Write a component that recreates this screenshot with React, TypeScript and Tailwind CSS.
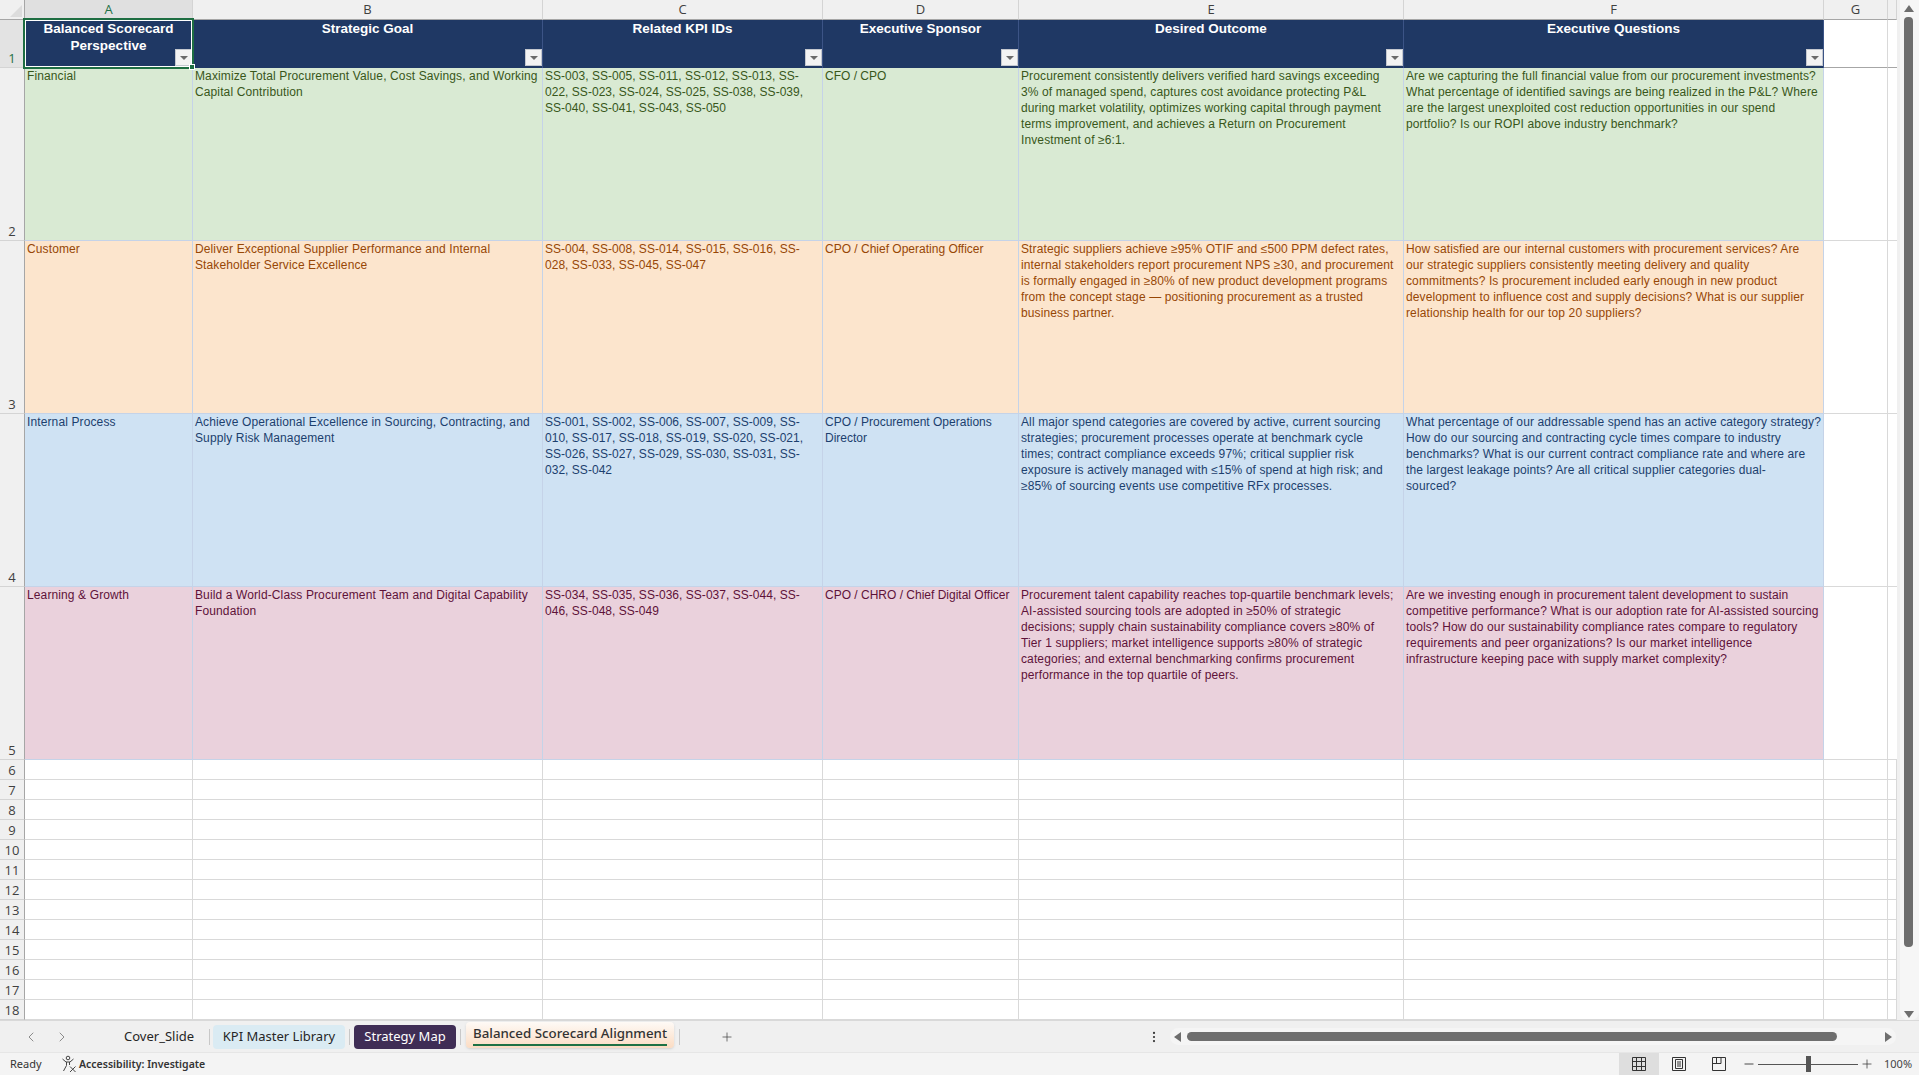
import React from 'react';
import { ChevronLeft, ChevronRight, MoreVertical, Plus, Minus } from 'lucide-react';

const columns = ['A', 'B', 'C', 'D', 'E', 'F', 'G', ''];

const headers = [
    ['Balanced Scorecard', 'Perspective'],
    ['Strategic Goal'],
    ['Related KPI IDs'],
    ['Executive Sponsor'],
    ['Desired Outcome'],
    ['Executive Questions'],
];

const tracking = [
    'tracking-[0.12px]',
    'tracking-[0.12px]',
    'tracking-[0.03px]',
    'tracking-normal',
    'tracking-[0.12px]',
    'tracking-[0.12px]',
];

const rows = [
    {
        fill: 'bg-[#d9ead3] text-[#38571a]',
        cells: [
            ['Financial'],
            ['Maximize Total Procurement Value, Cost Savings, and Working', 'Capital Contribution'],
            ['SS-003, SS-005, SS-011, SS-012, SS-013, SS-', '022, SS-023, SS-024, SS-025, SS-038, SS-039,', 'SS-040, SS-041, SS-043, SS-050'],
            ['CFO / CPO'],
            [
                'Procurement consistently delivers verified hard savings exceeding',
                '3% of managed spend, captures cost avoidance protecting P&L',
                'during market volatility, optimizes working capital through payment',
                'terms improvement, and achieves a Return on Procurement',
                'Investment of ≥6:1.',
            ],
            [
                'Are we capturing the full financial value from our procurement investments?',
                'What percentage of identified savings are being realized in the P&L? Where',
                'are the largest unexploited cost reduction opportunities in our spend',
                'portfolio? Is our ROPI above industry benchmark?',
            ],
        ],
    },
    {
        fill: 'bg-[#fce5cd] text-[#974706]',
        cells: [
            ['Customer'],
            ['Deliver Exceptional Supplier Performance and Internal', 'Stakeholder Service Excellence'],
            ['SS-004, SS-008, SS-014, SS-015, SS-016, SS-', '028, SS-033, SS-045, SS-047'],
            ['CPO / Chief Operating Officer'],
            [
                'Strategic suppliers achieve ≥95% OTIF and ≤500 PPM defect rates,',
                'internal stakeholders report procurement NPS ≥30, and procurement',
                'is formally engaged in ≥80% of new product development programs',
                'from the concept stage — positioning procurement as a trusted',
                'business partner.',
            ],
            [
                'How satisfied are our internal customers with procurement services? Are',
                'our strategic suppliers consistently meeting delivery and quality',
                'commitments? Is procurement included early enough in new product',
                'development to influence cost and supply decisions? What is our supplier',
                'relationship health for our top 20 suppliers?',
            ],
        ],
    },
    {
        fill: 'bg-[#cfe2f3] text-[#1c3f6e]',
        cells: [
            ['Internal Process'],
            ['Achieve Operational Excellence in Sourcing, Contracting, and', 'Supply Risk Management'],
            [
                'SS-001, SS-002, SS-006, SS-007, SS-009, SS-',
                '010, SS-017, SS-018, SS-019, SS-020, SS-021,',
                'SS-026, SS-027, SS-029, SS-030, SS-031, SS-',
                '032, SS-042',
            ],
            ['CPO / Procurement Operations', 'Director'],
            [
                'All major spend categories are covered by active, current sourcing',
                'strategies; procurement processes operate at benchmark cycle',
                'times; contract compliance exceeds 97%; critical supplier risk',
                'exposure is actively managed with ≤15% of spend at high risk; and',
                '≥85% of sourcing events use competitive RFx processes.',
            ],
            [
                'What percentage of our addressable spend has an active category strategy?',
                'How do our sourcing and contracting cycle times compare to industry',
                'benchmarks? What is our current contract compliance rate and where are',
                'the largest leakage points? Are all critical supplier categories dual-',
                'sourced?',
            ],
        ],
    },
    {
        fill: 'bg-[#ead1dc] text-[#5e1239]',
        cells: [
            ['Learning & Growth'],
            ['Build a World-Class Procurement Team and Digital Capability', 'Foundation'],
            ['SS-034, SS-035, SS-036, SS-037, SS-044, SS-', '046, SS-048, SS-049'],
            ['CPO / CHRO / Chief Digital Officer'],
            [
                'Procurement talent capability reaches top-quartile benchmark levels;',
                'AI-assisted sourcing tools are adopted in ≥50% of strategic',
                'decisions; supply chain sustainability compliance covers ≥80% of',
                'Tier 1 suppliers; market intelligence supports ≥80% of strategic',
                'categories; and external benchmarking confirms procurement',
                'performance in the top quartile of peers.',
            ],
            [
                'Are we investing enough in procurement talent development to sustain',
                'competitive performance? What is our adoption rate for AI-assisted sourcing',
                'tools? How do our sustainability compliance rates compare to regulatory',
                'requirements and peer organizations? Is our market intelligence',
                'infrastructure keeping pace with supply market complexity?',
            ],
        ],
    },
];

const emptyRows = [6, 7, 8, 9, 10, 11, 12, 13, 14, 15, 16, 17, 18];

const FilterButton = () => (
    <div className="absolute right-0 bottom-[2px] w-[17px] h-[17px] bg-[#f3f3f3] border border-[#c4c8cf] flex items-center justify-center">
        <div className="w-0 h-0 border-l-[4px] border-r-[4px] border-t-[4px] border-l-transparent border-r-transparent border-t-[#6b6b6b]" />
    </div>
);

const RowHead = ({ label, active }: { label: number; active?: boolean }) => (
    <div className={`flex items-end justify-center border-r border-r-[#a6a6a6] border-b border-b-[#d4d4d4] text-[13px] leading-[18px] font-['Open_Sans',sans-serif] ${active ? 'text-[#1e7145] bg-[#e3e3e3]' : 'text-[#404040] bg-[#f0f0f0]'}`}>
        {label}
    </div>
);

const AccessibilityIcon = () => (
    <svg width="18" height="18" viewBox="0 0 18 18" fill="none" stroke="#444" strokeWidth="1">
        <circle cx="8" cy="3" r="1.8" />
        <path d="M2.5 4 L6 7 H10 L13.5 4 M6.5 7 V10.5 L3.5 16 M9.5 7 V10 " />
        <path d="M10 11.5 L15.5 17 M15.5 11.5 L10 17" />
    </svg>
);

export default function App() {
    return (
        <div className="w-[1919px] h-[1075px] overflow-hidden flex flex-col bg-[#f0f0f0] font-['Liberation_Sans',Arial,sans-serif]">
            <div className="flex h-[1020px]">
                {/* Sheet */}
                <div className="relative w-[1897px] grid grid-cols-[25px_168px_350px_280px_196px_385px_420px_64px_9px] grid-rows-[20px_48px_173px_173px_173px_173px_repeat(13,20px)] overflow-hidden">
                    <div className="bg-[#f0f0f0] border-r border-b border-[#a6a6a6] flex items-end justify-end">
                        <div className="w-0 h-0 mr-[2px] mb-[2px] border-l-[12px] border-b-[12px] border-l-transparent border-b-[#dcdcdc]" />
                    </div>
                    {columns.map((c, i) => (
                        <div
                            key={i}
                            className={`flex items-center justify-center border-b border-b-[#a6a6a6] border-r border-r-[#d4d4d4] text-[13px] font-['Open_Sans',sans-serif] ${i === 0 ? 'bg-[#e0e0e0] text-[#1e7145]' : 'bg-[#f0f0f0] text-[#404040]'}`}
                        >
                            {c}
                        </div>
                    ))}

                    {/* Header row */}
                    <RowHead label={1} active />
                    {headers.map((h, i) => (
                        <div key={i} className="relative bg-[#1f3864] text-white font-bold text-[13.5px] leading-[17px] text-center border-r border-[#3c5486]">
                            {h.map((line) => (
                                <div key={line} className="whitespace-nowrap">{line}</div>
                            ))}
                            <FilterButton />
                        </div>
                    ))}
                    <div className="bg-white border-r border-r-[#d9d9d9] border-b border-b-[#a6a6a6]" />
                    <div className="bg-white border-b border-b-[#a6a6a6]" />

                    {/* Data rows */}
                    {rows.map((row, r) => (
                        <React.Fragment key={r}>
                            <RowHead label={r + 2} />
                            {row.cells.map((cell, c) => (
                                <div key={c} className={`${row.fill} ${tracking[c]} border-r border-b border-[#c5d3e8] pl-[2px] text-[12px] leading-[16px]`}>
                                    {cell.map((line) => (
                                        <div key={line} className="whitespace-nowrap">{line}</div>
                                    ))}
                                </div>
                            ))}
                            <div className="bg-white border-r border-b border-[#d9d9d9]" />
                            <div className="bg-white border-b border-[#d9d9d9]" />
                        </React.Fragment>
                    ))}

                    {/* Empty rows */}
                    {emptyRows.map((n) => (
                        <React.Fragment key={n}>
                            <RowHead label={n} />
                            {columns.map((c, i) => (
                                <div key={i} className="bg-white border-r border-b border-[#d9d9d9]" />
                            ))}
                        </React.Fragment>
                    ))}

                    {/* Selected cell */}
                    <div className="absolute left-[23px] top-[18px] w-[171px] h-[51px] border-2 border-[#1e6e42] pointer-events-none">
                        <div className="w-full h-full border border-white" />
                        <div className="absolute right-[-3px] bottom-[-3px] w-[6px] h-[6px] bg-[#1e6e42] border border-white" />
                    </div>
                </div>

                {/* Vertical scrollbar */}
                <div className="w-[22px] bg-[#f0f0f0] pl-[3px]">
                    <div className="h-full bg-[#f6f6f6] rounded-b-[8px] flex flex-col items-center pt-[5px] pb-[2px] pr-[2px]">
                        <div className="w-0 h-0 border-l-[5px] border-r-[5px] border-b-[7px] border-l-transparent border-r-transparent border-b-[#6e6e6e]" />
                        <div className="mt-[5px] w-[9px] h-[930px] rounded-[4px] bg-[#6e6e6e]" />
                        <div className="flex-1" />
                        <div className="w-0 h-0 border-l-[5px] border-r-[5px] border-t-[7px] border-l-transparent border-r-transparent border-t-[#6e6e6e]" />
                    </div>
                </div>
            </div>

            {/* Sheet tabs */}
            <div className="h-[32px] flex items-center bg-[#f0f0f0] font-['Noto_Sans',sans-serif] text-[13px] text-[#262626] border-t border-[#d9d9d9]">
                <div className="w-[124px] pl-[23px] flex items-center gap-[15px] text-[#777]">
                    <ChevronLeft size={16} strokeWidth={1.25} />
                    <ChevronRight size={16} strokeWidth={1.25} />
                </div>
                <span className="w-[85px]">Cover_Slide</span>
                <div className="w-px h-[16px] bg-[#c8c8c8]" />
                <div className="ml-[3px] w-[132px] h-[24px] rounded-[4px] bg-[#daebf3] flex items-center justify-center">KPI Master Library</div>
                <div className="ml-[4px] w-px h-[16px] bg-[#c8c8c8]" />
                <div className="ml-[4px] w-[102px] h-[24px] rounded-[4px] bg-[#3f2d55] text-white flex items-center justify-center">Strategy Map</div>
                <div className="ml-[4px] w-px h-[16px] bg-[#c8c8c8]" />
                <div className="ml-[5px] self-start mt-[1px] w-[208px] h-[26px] rounded-[4px] bg-gradient-to-b from-[#fefaf6] to-[#fbdcc3] shadow-sm flex flex-col items-center pt-[3px]">
                    <span className="text-[13.3px] font-medium leading-[17px] whitespace-nowrap text-[#333]">Balanced Scorecard Alignment</span>
                    <div className="mt-[2px] w-[194px] h-[2px] bg-[#1e7145]" />
                </div>
                <div className="ml-[5px] w-px h-[16px] bg-[#c8c8c8]" />
                <Plus size={14} strokeWidth={1.25} className="ml-[40px] text-[#444]" />

                <MoreVertical size={14} strokeWidth={1.75} className="ml-[413px] text-[#333]" />

                {/* Horizontal scrollbar */}
                <div className="ml-[9px] w-[726px] h-[17px] rounded-full bg-[#f5f5f5] flex items-center pl-[4px] pr-[4px]">
                    <div className="w-0 h-0 border-t-[5px] border-b-[5px] border-r-[7px] border-t-transparent border-b-transparent border-r-[#6e6e6e]" />
                    <div className="ml-[6px] w-[650px] h-[9px] rounded-full bg-[#6e6e6e]" />
                    <div className="flex-1" />
                    <div className="w-0 h-0 border-t-[5px] border-b-[5px] border-l-[7px] border-t-transparent border-b-transparent border-l-[#6e6e6e]" />
                </div>
            </div>

            {/* Status bar */}
            <div className="h-[23px] flex items-center bg-[#f4f4f4] border-t border-[#e6e6e6] font-['Noto_Sans',sans-serif] text-[11px] text-[#333]">
                <span className="ml-[10px] w-[50px] pt-[1px]">Ready</span>
                <AccessibilityIcon />
                <span className="ml-[1px] pt-[1px] text-[10.5px] font-semibold">Accessibility: Investigate</span>
                <div className="flex-1" />
                <div className="w-[40px] h-full bg-[#dedede] flex items-center justify-center">
                    <svg width="14" height="14" viewBox="0 0 14 14" fill="none" stroke="#333">
                        <path d="M.5.5h13v13H.5zM4.5.5v13M9.5.5v13M.5 4.5h13M.5 9.5h13" />
                    </svg>
                </div>
                <div className="w-[40px] flex items-center justify-center">
                    <svg width="14" height="14" viewBox="0 0 14 14" fill="none" stroke="#333">
                        <path d="M.5.5h13v13H.5zM3.5 2.5h7v9h-7zM5 5h4M5 7h4M5 9h4" />
                    </svg>
                </div>
                <div className="w-[40px] flex items-center justify-center">
                    <svg width="14" height="14" viewBox="0 0 14 14" fill="none" stroke="#333">
                        <path d="M.5.5h13v13H.5zM.5 6.5h8.5V.5M4.5.5v6" />
                    </svg>
                </div>
                <Minus size={14} strokeWidth={1.5} className="ml-[3px] text-[#333]" />
                <div className="relative ml-[2px] w-[100px] h-px bg-[#555]">
                    <div className="absolute left-[48px] top-[-8px] w-[5px] h-[16px] bg-[#555]" />
                </div>
                <Plus size={14} strokeWidth={1.25} className="ml-[2px] text-[#333]" />
                <span className="ml-[10px] w-[35px] text-[11px] text-[#444]">100%</span>
            </div>
        </div>
    );
}
